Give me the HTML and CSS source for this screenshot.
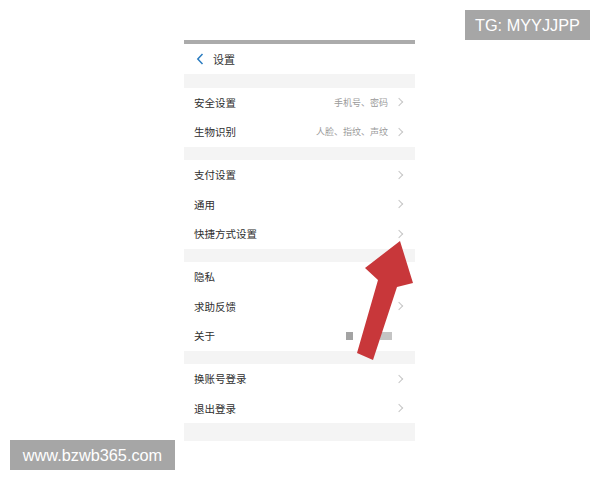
FILE: index.html
```html
<!DOCTYPE html>
<html lang="zh">
<head>
<meta charset="utf-8">
<link rel="stylesheet" href="styles.css">
</head>
<body>
<div class="stage">
  <div class="phone">
    <div class="topbar"></div>
    <div class="header">
      <svg class="back" width="8" height="12" viewBox="0 0 8 12"><path d="M6.5 1 L1.8 6 L6.5 11" fill="none" stroke="#2b7cc0" stroke-width="1.5"/></svg>
      <span class="title">设置</span>
    </div>
    <div class="gap"></div>
    <div class="group">
      <div class="row"><span class="label">安全设置</span><span class="value">手机号、密码</span><span class="chev"></span></div>
      <div class="row"><span class="label">生物识别</span><span class="value">人脸、指纹、声纹</span><span class="chev"></span></div>
    </div>
    <div class="gap"></div>
    <div class="group">
      <div class="row"><span class="label">支付设置</span><span class="chev"></span></div>
      <div class="row"><span class="label">通用</span><span class="chev"></span></div>
      <div class="row"><span class="label">快捷方式设置</span><span class="chev"></span></div>
    </div>
    <div class="gap"></div>
    <div class="group">
      <div class="row"><span class="label">隐私</span><span class="chev"></span></div>
      <div class="row"><span class="label">求助反馈</span><span class="chev"></span></div>
      <div class="row"><span class="label">关于</span><span class="blocks"><i class="b1"></i><i class="b2"></i></span></div>
    </div>
    <div class="gap"></div>
    <div class="group">
      <div class="row"><span class="label">换账号登录</span><span class="chev"></span></div>
      <div class="row"><span class="label">退出登录</span><span class="chev"></span></div>
    </div>
    <div class="bottom"></div>
  </div>
  <svg class="arrow" width="600" height="480" viewBox="0 0 600 480">
    <polygon points="400,241 413,283 397,287 373,360 357,353 378,280 365,268" fill="#c8373a"/>
  </svg>
  <div class="tag tg">TG: MYYJJPP</div>
  <div class="tag site">www.bzwb365.com</div>
</div>
</body>
</html>
```
FILE: styles.css
```css
html, body {
  margin: 0;
  padding: 0;
  background: #fff;
}
.stage {
  position: relative;
  width: 600px;
  height: 480px;
  overflow: hidden;
  font-family: "Noto Sans CJK SC", "Noto Sans", sans-serif;
}
.phone {
  width: 231px;
  margin: 40px 0 0 184px;
  display: flex;
  flex-direction: column;
}
.topbar {
  height: 4px;
  background: #ababab;
}
.header {
  height: 30px;
  display: flex;
  align-items: center;
  padding-left: 12px;
  gap: 9px;
}
.title {
  font-size: 11px;
  color: #333;
}
.gap {
  height: 13.5px;
  background: #f4f4f4;
}
.bottom {
  height: 17.5px;
  background: #f4f4f4;
}
.group {
  display: flex;
  flex-direction: column;
}
.row {
  height: 29.5px;
  display: flex;
  align-items: center;
  padding: 0 11px 0 10px;
}
.label {
  font-size: 10.5px;
  color: #2e2e2e;
  flex: 1;
}
.value {
  font-size: 9px;
  color: #9a9a9a;
  margin-right: 8px;
}
.chev {
  width: 5px;
  height: 5px;
  border-top: 1px solid #c6c6c6;
  border-right: 1px solid #c6c6c6;
  transform: rotate(45deg);
  margin-right: 2px;
}
.blocks {
  display: flex;
  align-items: center;
  margin-right: 12px;
}
.blocks i {
  display: block;
  height: 8px;
}
.b1 {
  width: 7px;
  background: #a3a3a3;
  margin-right: 27px;
}
.b2 {
  width: 12px;
  background: #c4c4c4;
}
.arrow {
  position: absolute;
  left: 0;
  top: 0;
}
.tag {
  position: absolute;
  background: #a6a6a6;
  color: #fff;
  font-family: "Liberation Sans", Arial, sans-serif;
  font-size: 16.3px;
  display: flex;
  align-items: center;
  justify-content: center;
}
.tg {
  left: 465px;
  top: 10px;
  width: 125px;
  height: 30px;
}
.site {
  left: 10px;
  top: 440px;
  width: 165px;
  height: 30px;
}
```
